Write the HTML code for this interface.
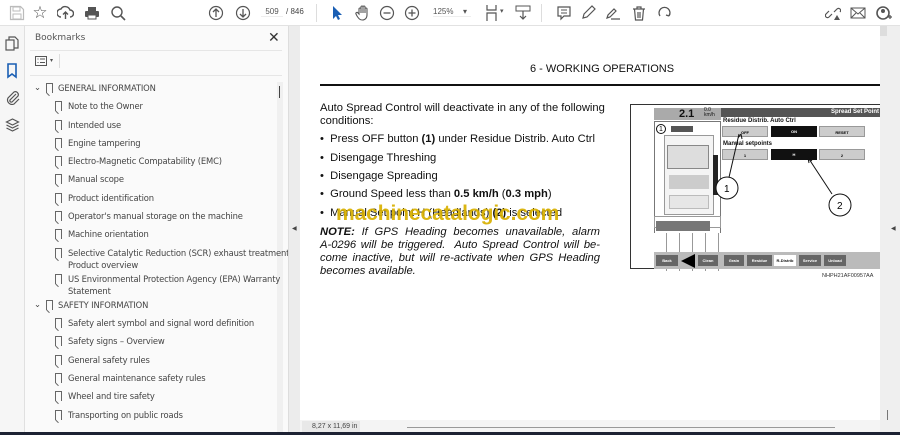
<!DOCTYPE html>
<html><head><meta charset="utf-8"><style>
*{margin:0;padding:0;box-sizing:border-box}
body{width:900px;height:435px;overflow:hidden;background:#f4f4f4;font-family:"Liberation Sans",sans-serif;position:relative}
.a{position:absolute}
.tb{left:0;top:0;width:900px;height:26px;background:#fff;border-bottom:1px solid #e2e2e2}
.ic{position:absolute;top:5px;width:16px;height:16px;color:#555;font-size:14px;line-height:16px;text-align:center}
.side{left:0;top:26px;width:25px;height:406px;background:#f6f6f6;border-right:1px solid #e0e0e0}
.panel{left:25px;top:26px;width:263px;height:406px;background:#fafafa}
.bm{position:absolute;font-size:8.4px;color:#444;font-family:"DejaVu Sans","Liberation Sans",sans-serif;letter-spacing:-0.15px;line-height:11.5px}
.bi{position:absolute;width:7px;height:10px;border:1px solid #666;border-bottom:none}
.bi:after{content:"";position:absolute;left:0px;bottom:-2px;width:4px;height:4px;border-left:1px solid #666;transform:rotate(-45deg)}
.page{left:300px;top:26px;width:580px;height:394px;background:#fff}
.t{position:absolute;font-size:11.2px;color:#111;white-space:nowrap}
.j{position:absolute;left:20px;width:280px;font-size:11.2px;font-style:italic;color:#111;text-align:justify;text-align-last:justify;white-space:nowrap}
.btn{position:absolute;height:11px;font-size:4px;text-align:center;line-height:11px;font-weight:bold}
</style></head><body>
<div class="a tb">
 <svg class="a" style="left:9px;top:5px" width="16" height="16"><path d="M1.5 1.5h10l3 3v10h-13z" fill="none" stroke="#bbb" stroke-width="1.2"/><rect x="4" y="2" width="7" height="4" fill="none" stroke="#bbb"/><rect x="4" y="9" width="8" height="5" fill="none" stroke="#bbb"/></svg>
 <div class="ic" style="left:32px;font-size:17px">☆</div>
 <svg class="a" style="left:57px;top:5px" width="17" height="16"><path d="M4 12a4 4 0 0 1 0-8 5 5 0 0 1 9 1 3.5 3.5 0 0 1 0 7M8.5 14V7M6 9.5l2.5-2.5 2.5 2.5" fill="none" stroke="#555" stroke-width="1.4"/></svg>
 <svg class="a" style="left:84px;top:5px" width="16" height="16"><rect x="4" y="2" width="8" height="4" fill="#555"/><rect x="1" y="6" width="14" height="6" rx="1" fill="#555"/><rect x="4" y="10" width="8" height="4" fill="#fff" stroke="#555"/></svg>
 <svg class="a" style="left:110px;top:5px" width="16" height="16"><circle cx="7" cy="7" r="5" fill="none" stroke="#555" stroke-width="1.4"/><path d="M11 11l4 4" stroke="#555" stroke-width="1.6"/></svg>
 <svg class="a" style="left:208px;top:5px" width="16" height="16"><circle cx="8" cy="8" r="6.5" fill="none" stroke="#555" stroke-width="1.2"/><path d="M8 12V4M5 7l3-3 3 3" fill="none" stroke="#555" stroke-width="1.3"/></svg>
 <svg class="a" style="left:235px;top:5px" width="16" height="16"><circle cx="8" cy="8" r="6.5" fill="none" stroke="#555" stroke-width="1.2"/><path d="M8 4v8M5 9l3 3 3-3" fill="none" stroke="#555" stroke-width="1.3"/></svg>
 <div class="a" style="left:261px;top:7px;width:22px;font-size:8px;color:#555;border-bottom:1px solid #eee;text-align:center">509</div>
 <div class="a" style="left:286px;top:7px;font-size:8px;color:#444">/ 846</div>
 <div class="a" style="left:316px;top:4px;width:1px;height:18px;background:#ddd"></div>
 <svg class="a" style="left:330px;top:5px" width="14" height="16"><path d="M3 1v13l3-3 2 4 2-1-2-4h4z" fill="#1a5fb4"/></svg>
 <svg class="a" style="left:355px;top:4px" width="16" height="17"><path d="M4 10V5a1 1 0 0 1 2 0v4V3a1 1 0 0 1 2 0v6V3a1 1 0 0 1 2 0v6V5a1 1 0 0 1 2 0v6c0 3-2 5-4.5 5S4 15 2 12l-1-2a1 1 0 0 1 2-1z" fill="none" stroke="#555" stroke-width="1.1"/></svg>
 <svg class="a" style="left:379px;top:5px" width="16" height="16"><circle cx="8" cy="8" r="6.5" fill="none" stroke="#555" stroke-width="1.2"/><path d="M4.5 8h7" stroke="#555" stroke-width="1.3"/></svg>
 <svg class="a" style="left:404px;top:5px" width="16" height="16"><circle cx="8" cy="8" r="6.5" fill="none" stroke="#555" stroke-width="1.2"/><path d="M4.5 8h7M8 4.5v7" stroke="#555" stroke-width="1.3"/></svg>
 <div class="a" style="left:433px;top:7px;width:38px;font-size:8px;color:#555;border-bottom:1px solid #eee">125%</div>
 <div class="a" style="left:463px;top:7px;font-size:8px;color:#555">▾</div>
 <svg class="a" style="left:485px;top:4px" width="14" height="18"><path d="M2 1v5h9V1M2 17v-8h9v8" fill="none" stroke="#555" stroke-width="1.2"/></svg>
 <div class="a" style="left:500px;top:7px;font-size:7px;color:#555">▾</div>
 <svg class="a" style="left:515px;top:5px" width="16" height="16"><rect x="1" y="1" width="14" height="5" fill="none" stroke="#555"/><path d="M8 6v8M5 11l3 3 3-3" fill="none" stroke="#555" stroke-width="1.2"/></svg>
 <div class="a" style="left:541px;top:4px;width:1px;height:18px;background:#ddd"></div>
 <svg class="a" style="left:556px;top:5px" width="16" height="16"><path d="M2 2h12v9H8l-3 3v-3H2z" fill="none" stroke="#555" stroke-width="1.2"/><path d="M5 5h6M5 8h6" stroke="#555"/></svg>
 <svg class="a" style="left:580px;top:5px" width="16" height="16"><path d="M3 13l1-4 8-8 3 3-8 8z" fill="none" stroke="#555" stroke-width="1.2"/></svg>
 <svg class="a" style="left:605px;top:5px" width="16" height="16"><path d="M2 13l1-3 6-6 2 2-6 6zM6 14h9" fill="none" stroke="#555" stroke-width="1.2"/></svg>
 <svg class="a" style="left:631px;top:5px" width="16" height="16"><path d="M2 4h12M6 4V2h4v2M3.5 4l1 11h7l1-11M7 7v6M9 7v6" fill="none" stroke="#555" stroke-width="1.2"/></svg>
 <svg class="a" style="left:657px;top:5px" width="16" height="16"><path d="M3 11a5.5 5.5 0 1 1 9 0M12 11l-3-1M12 11l1-3" fill="none" stroke="#555" stroke-width="1.3"/></svg>
 <svg class="a" style="left:825px;top:5px" width="16" height="16"><path d="M7 9l-3 3a2 2 0 0 1-3-3l3-3M9 7l3-3a2 2 0 0 1 3 3" fill="none" stroke="#555" stroke-width="1.2"/><path d="M9 15l3-5 3 5z" fill="#555"/></svg>
 <svg class="a" style="left:850px;top:5px" width="16" height="16"><rect x="1" y="3" width="14" height="10" fill="none" stroke="#555"/><path d="M1 3l7 6 7-6M1 13l5-5M15 13l-5-5" fill="none" stroke="#555"/></svg>
 <svg class="a" style="left:876px;top:5px" width="16" height="16"><circle cx="7" cy="8" r="6" fill="none" stroke="#555" stroke-width="1.6"/><circle cx="7" cy="6" r="2" fill="#555"/><path d="M12 12h4M14 10v4" stroke="#555" stroke-width="1.2"/></svg>
</div>
<div class="a side">
 <svg class="a" style="left:5px;top:10px" width="15" height="16"><rect x="1" y="4" width="8" height="10" fill="none" stroke="#555" stroke-width="1.2"/><path d="M4 4V1h6l3 3v8H9" fill="none" stroke="#555" stroke-width="1.2"/></svg>
 <svg class="a" style="left:6px;top:37px" width="12" height="16"><path d="M2 1h8v13l-4-3-4 3z" fill="none" stroke="#1a5fb4" stroke-width="1.6"/></svg>
 <svg class="a" style="left:5px;top:63px" width="15" height="16"><path d="M11 5l-6 6a1.5 1.5 0 0 0 2 2l6-6a3 3 0 0 0-4-4l-6 6a4.5 4.5 0 0 0 6 6l5-5" fill="none" stroke="#555" stroke-width="1.2"/></svg>
 <svg class="a" style="left:5px;top:91px" width="15" height="16"><path d="M7.5 2l6 3-6 3-6-3zM1.5 8l6 3 6-3M1.5 11l6 3 6-3" fill="none" stroke="#555" stroke-width="1.2"/></svg>
</div>
<div class="a panel">
 <div class="a" style="left:10px;top:7px;font-size:9px;color:#555;font-family:'DejaVu Sans',sans-serif">Bookmarks</div>
 <div class="a" style="left:243px;top:3px;font-size:14px;color:#333">✕</div>
 <div class="a" style="left:5px;top:24px;width:252px;height:1px;background:#e6e6e6"></div>
 <svg class="a" style="left:10px;top:30px" width="12" height="10"><rect x="0.5" y="0.5" width="11" height="9" fill="none" stroke="#555"/><path d="M2.5 3h1M5 3h5M2.5 6.5h1M5 6.5h5" stroke="#555"/></svg>
 <div class="a" style="left:25px;top:31px;font-size:6px;color:#555">▾</div>
 <div class="a" style="left:34px;top:28px;width:1px;height:14px;background:#ddd"></div>
 <div class="a" style="left:5px;top:49px;width:252px;height:1px;background:#e6e6e6"></div>
 <div class="a" style="left:252px;top:56px;width:6px;height:350px;background:#f0f0f0"></div>
 <div class="a" style="left:254px;top:60px;width:1px;height:12px;background:#444"></div>
</div>
<div class="bm" style="left:34px;top:82px">⌄</div><div class="bi" style="left:46px;top:83px"></div><div class="bm" style="left:58px;top:83px">GENERAL INFORMATION</div>
<div class="bi" style="left:55px;top:101px"></div><div class="bm" style="left:68px;top:101px">Note to the Owner</div>
<div class="bi" style="left:55px;top:120px"></div><div class="bm" style="left:68px;top:120px">Intended use</div>
<div class="bi" style="left:55px;top:138px"></div><div class="bm" style="left:68px;top:138px">Engine tampering</div>
<div class="bi" style="left:55px;top:156px"></div><div class="bm" style="left:68px;top:156px">Electro-Magnetic Compatability (EMC)</div>
<div class="bi" style="left:55px;top:174px"></div><div class="bm" style="left:68px;top:174px">Manual scope</div>
<div class="bi" style="left:55px;top:193px"></div><div class="bm" style="left:68px;top:193px">Product identification</div>
<div class="bi" style="left:55px;top:211px"></div><div class="bm" style="left:68px;top:211px">Operator's manual storage on the machine</div>
<div class="bi" style="left:55px;top:229px"></div><div class="bm" style="left:68px;top:229px">Machine orientation</div>
<div class="bi" style="left:55px;top:248px"></div><div class="bm" style="left:68px;top:248px">Selective Catalytic Reduction (SCR) exhaust treatment -<br>Product overview</div>
<div class="bi" style="left:55px;top:274px"></div><div class="bm" style="left:68px;top:274px">US Environmental Protection Agency (EPA) Warranty<br>Statement</div>
<div class="bm" style="left:34px;top:299px">⌄</div><div class="bi" style="left:46px;top:300px"></div><div class="bm" style="left:58px;top:300px">SAFETY INFORMATION</div>
<div class="bi" style="left:55px;top:318px"></div><div class="bm" style="left:68px;top:318px">Safety alert symbol and signal word definition</div>
<div class="bi" style="left:55px;top:336px"></div><div class="bm" style="left:68px;top:336px">Safety signs  – Overview</div>
<div class="bi" style="left:55px;top:355px"></div><div class="bm" style="left:68px;top:355px">General safety rules</div>
<div class="bi" style="left:55px;top:373px"></div><div class="bm" style="left:68px;top:373px">General maintenance safety rules</div>
<div class="bi" style="left:55px;top:391px"></div><div class="bm" style="left:68px;top:391px">Wheel and tire safety</div>
<div class="bi" style="left:55px;top:410px"></div><div class="bm" style="left:68px;top:410px">Transporting on public roads</div>
<div class="a" style="left:288px;top:26px;width:12px;height:406px;background:#ececec;border-left:1px solid #ddd"></div>
<div class="a" style="left:292px;top:225px;font-size:6px;color:#444">◀</div>
<div class="a page">
 <div class="t" style="left:230px;top:37px;font-size:11px">6 - WORKING OPERATIONS</div>
 <div class="a" style="left:20px;top:58px;width:560px;height:2px;background:#111"></div>
 <div class="t" style="left:20px;top:76px">Auto Spread Control will deactivate in any of the following</div>
 <div class="t" style="left:20px;top:89px">conditions:</div>
 <div class="t" style="left:20px;top:107px">•&nbsp; Press OFF button <b>(1)</b> under Residue Distrib. Auto Ctrl</div>
 <div class="t" style="left:20px;top:126px">•&nbsp; Disengage Threshing</div>
 <div class="t" style="left:20px;top:144px">•&nbsp; Disengage Spreading</div>
 <div class="t" style="left:20px;top:162px">•&nbsp; Ground Speed less than <b>0.5 km/h</b> (<b>0.3 mph</b>)</div>
 <div class="t" style="left:20px;top:181px">•&nbsp; Manual Set point H (Headlands) <b>(2)</b> is selected</div>
 <div class="t" style="left:36px;top:176px;font-size:21px;font-weight:bold;color:#d8b000;opacity:.92;letter-spacing:-0.1px">machinecatalogic.com</div>
 <div class="j" style="top:200px"><b>NOTE:</b> If GPS Heading becomes unavailable, alarm</div>
 <div class="j" style="top:213px">A-0296 will be triggered.&nbsp; Auto Spread Control will be-</div>
 <div class="j" style="top:226px">come inactive, but will re-activate when GPS Heading</div>
 <div class="j" style="top:239px;text-align-last:left">becomes available.</div>
 <!-- figure -->
 <div class="a" style="left:330px;top:78px;width:250px;height:165px;border:1px solid #333;border-right:none;background:#fff">
  <div class="a" style="left:23px;top:3px;width:67px;height:12px;background:#aaa"></div>
  <div class="a" style="left:48px;top:3px;font-size:11px;font-weight:bold;color:#111">2.1</div>
  <div class="a" style="left:73px;top:3px;font-size:5px;color:#111;line-height:5px">0.0<br>km/h</div>
  <div class="a" style="left:23px;top:16px;width:67px;height:150px;border:1px solid #777;background:#fff"></div>
  <div class="a" style="left:25px;top:19px;width:10px;height:10px;border:1px solid #111;border-radius:50%;font-size:7px;text-align:center;line-height:9px">1</div>
  <div class="a" style="left:40px;top:21px;width:22px;height:6px;background:#555"></div>
  <div class="a" style="left:33px;top:30px;width:50px;height:80px;border:1px solid #999;background:#f4f4f4"></div>
  <div class="a" style="left:36px;top:40px;width:42px;height:24px;border:1px solid #888;background:#ddd"></div>
  <div class="a" style="left:38px;top:70px;width:40px;height:14px;background:#ccc"></div>
  <div class="a" style="left:38px;top:90px;width:40px;height:14px;background:#e6e6e6;border:1px solid #bbb"></div>
  <div class="a" style="left:82px;top:50px;width:5px;height:40px;background:#222"></div>
  <div class="a" style="left:23px;top:111px;width:67px;height:12px;background:#fff;border:1px solid #999"></div>
  <div class="a" style="left:25px;top:116px;width:54px;height:10px;background:#777"></div>
  <div class="a" style="left:23px;top:128px;width:67px;height:38px;background:repeating-linear-gradient(90deg,#fff 0 12px,#999 12px 13px),#fff"></div>
  <div class="a" style="left:90px;top:3px;width:160px;height:9px;background:#555;color:#fff;font-size:6px;font-weight:bold;text-align:right;padding-right:2px;line-height:9px">Spread Set Point</div>
  <div class="a" style="left:92px;top:13px;font-size:6px;font-weight:bold;color:#111">Residue Distrib. Auto Ctrl</div>
  <div class="btn" style="left:91px;top:21px;width:46px;background:#ccc;border:1px solid #999">OFF</div>
  <div class="btn" style="left:140px;top:21px;width:46px;background:#111;color:#fff">ON</div>
  <div class="btn" style="left:188px;top:21px;width:46px;background:#ccc;border:1px solid #999">RESET</div>
  <div class="a" style="left:92px;top:36px;font-size:6px;font-weight:bold;color:#111">Manual setpoints</div>
  <div class="btn" style="left:91px;top:44px;width:46px;background:#ccc;border:1px solid #999">1</div>
  <div class="btn" style="left:140px;top:44px;width:46px;background:#111;color:#fff">H</div>
  <div class="btn" style="left:188px;top:44px;width:46px;background:#ccc;border:1px solid #999">2</div>
  <div class="a" style="left:23px;top:147px;width:227px;height:17px;background:#bbb"></div>
  <div class="btn" style="left:25px;top:150px;width:22px;background:#666;color:#fff">Back</div>
  <div class="a" style="left:50px;top:147px;width:0;height:0;border-top:7px solid transparent;border-bottom:7px solid transparent;border-right:14px solid #000;margin-top:2px"></div>
  <div class="btn" style="left:67px;top:150px;width:20px;background:#666;color:#fff">Clean</div>
  <div class="btn" style="left:93px;top:150px;width:20px;background:#666;color:#fff">Grain</div>
  <div class="btn" style="left:116px;top:150px;width:25px;background:#666;color:#fff">Residue</div>
  <div class="btn" style="left:143px;top:150px;width:22px;background:#fff;color:#111">R-Distrib</div>
  <div class="btn" style="left:168px;top:150px;width:22px;background:#666;color:#fff">Service</div>
  <div class="btn" style="left:193px;top:150px;width:22px;background:#666;color:#fff">Unload</div>
  <svg class="a" style="left:0;top:0" width="250" height="165"><path d="M96 81L108 29M110 29l-3 4M110 29l1 5" stroke="#111" stroke-width="1" fill="none"/><path d="M201 89L178 54" stroke="#111" fill="none"/><path d="M177 53l1 5M177 53l4 3" stroke="#111" fill="none"/><circle cx="96" cy="83" r="11" fill="#fff" stroke="#111"/><text x="93" y="87" font-size="10" font-family="Liberation Sans">1</text><circle cx="209" cy="100" r="11" fill="#fff" stroke="#111"/><text x="206" y="104" font-size="10" font-family="Liberation Sans">2</text></svg>
 </div>
 <div class="t" style="left:522px;top:247px;font-size:5.5px;color:#333">NHPH21AF00957AA</div>
</div>
<div class="a" style="left:880px;top:26px;width:20px;height:406px;background:#efefef"></div>
<div class="a" style="left:880px;top:26px;width:7px;height:10px;background:#ddd"></div>
<div class="a" style="left:891px;top:225px;font-size:6px;color:#444">◀</div>
<div class="a" style="left:887px;top:410px;width:1px;height:10px;background:#777"></div>
<div class="a" style="left:300px;top:420px;width:580px;height:12px;background:#f4f4f4"></div>
<div class="a" style="left:302px;top:421px;width:58px;height:11px;background:#e8e8e8;font-size:7px;color:#444;line-height:11px;padding-left:10px">8,27 x 11,69 in</div>
<div class="a" style="left:407px;top:427px;width:428px;height:1px;background:#999"></div>
<div class="a" style="left:0;top:432px;width:900px;height:3px;background:#1d2233"></div>
</body></html>
